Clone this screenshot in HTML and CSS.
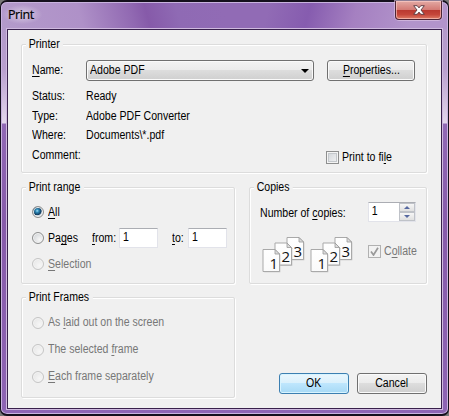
FILE: index.html
```html
<!DOCTYPE html>
<html lang="en">
<head>
<meta charset="utf-8">
<title>Print</title>
<link rel="stylesheet" href="styles.css">
</head>
<body>
<svg class="defs" aria-hidden="true">
  <defs>
    <linearGradient id="sheet" x2="0" y2="1"><stop offset="0" stop-color="#fff"/><stop offset="1" stop-color="#fafafa"/></linearGradient>
    <g id="page">
      <path d="M1.200 1.200h12l4 4v17.500h-16z" transform="translate(.6 .6)" fill="#bbb"/>
      <path d="M.5.5h12l4.500 4.500v17.500H.5z" fill="url(#sheet)" stroke="#a9a9a9"/>
      <path d="M12.500.5v4.500H17z" fill="#ddd" stroke="#999" stroke-width=".8"/>
    </g>
    <g id="stack">
      <use href="#page" x="24"/><text x="31" y="20">3</text>
      <use href="#page" x="12" y="5.500"/><text x="19" y="25">2</text>
      <use href="#page" y="12"/><text x="7" y="32">1</text>
    </g>
  </defs>
</svg>
<div class="window">
  <header class="titlebar">
    <h1>Print</h1>
    <button class="close" aria-label="Close"><svg width="12" height="10" viewBox="0 0 12 10"><path d="M.7.7h3.500L6 2.900 7.800.7h3.500L8 5l3.300 4.300H7.800L6 7.100 4.200 9.300H.7L4 5z" fill="#fff" stroke="#57383e" stroke-width=".9"/></svg></button>
  </header>
  <main class="client">
    <section class="group printer">
      <h2>Printer</h2>
      <div class="row name"><span class="key"><span class="t"><u>N</u>ame:</span></span><button class="btn combo"><span class="t">Adobe PDF</span><i></i></button><button class="btn props"><span class="t mid"><u>P</u>roperties...</span></button></div>
      <div class="row"><span class="key"><span class="t">Status:</span></span><span class="t">Ready</span></div>
      <div class="row"><span class="key"><span class="t">Type:</span></span><span class="t">Adobe PDF Converter</span></div>
      <div class="row"><span class="key"><span class="t">Where:</span></span><span class="t">Documents\*.pdf</span></div>
      <div class="row"><span class="key comment"><span class="t">Comment:</span></span><label class="file"><span class="check"></span><span class="t">Print to fi<u>l</u>e</span></label></div>
    </section>
    <div class="columns">
      <div class="left">
        <section class="group range">
          <h2>Print range</h2>
          <div class="row"><span class="radio on"></span><span class="t"><u>A</u>ll</span></div>
          <div class="row"><span class="radio"></span><span class="pages"><span class="t">Pa<u>g</u>es</span></span><span class="from"><span class="t"><u>f</u>rom:</span></span><span class="input"><span class="t">1</span></span><span class="to"><span class="t"><u>t</u>o:</span></span><span class="input"><span class="t">1</span></span></div>
          <div class="row off"><span class="radio"></span><span class="t"><u>S</u>election</span></div>
        </section>
        <section class="group frames">
          <h2>Print Frames</h2>
          <div class="row off"><span class="radio"></span><span class="t">As <u>l</u>aid out on the screen</span></div>
          <div class="row off"><span class="radio"></span><span class="t">The selected <u>f</u>rame</span></div>
          <div class="row off"><span class="radio"></span><span class="t"><u>E</u>ach frame separately</span></div>
        </section>
      </div>
      <div class="right">
        <section class="group copies">
          <h2>Copies</h2>
          <div class="row count"><span class="label"><span class="t">Number of <u>c</u>opies:</span></span><span class="input spin"><span class="t">1</span><span class="arrows"><b class="up"></b><b class="down"></b></span></span></div>
          <div class="row collate"><svg class="pagesicon" width="94" height="37" viewBox="0 0 94 37"><use href="#stack" x=".5"/><use href="#stack" x="48.500"/></svg><label class="off"><span class="check"><svg width="9" height="9" viewBox="0 0 9 9"><path d="M1 4.500l2.500 3.500L8 .8" fill="none" stroke="#999" stroke-width="1.700"/></svg></span><span class="t">C<u>o</u>llate</span></label></div>
        </section>
        <div class="actions"><button class="btn ok"><span class="t mid">OK</span></button><button class="btn"><span class="t mid">Cancel</span></button></div>
      </div>
    </div>
  </main>
</div>
</body>
</html>
```
FILE: styles.css
```css
* { box-sizing: border-box; }
html { background: #777; }
body { margin: 0; width: 449px; height: 416px; overflow: hidden; font: 12px/15px "Liberation Sans", sans-serif; color: #000; }
.defs { position: absolute; width: 0; height: 0; }
.defs text { font: 15px "Open Sans", sans-serif; fill: #111; }
button { font: inherit; color: inherit; padding: 0; }
h1, h2 { margin: 0; font-weight: normal; }
u { text-decoration: underline; text-underline-offset: 2px; text-decoration-thickness: 1px; text-decoration-skip-ink: none; }

.window {
  width: 449px; height: 416px; padding: 0 6px 6px 6px;
  border: 1px solid #15101d; border-top-width: 2px; border-bottom-width: 2px; border-radius: 7px;
  box-shadow: inset 0 0 0 1px #c9b3df;
  background:
    linear-gradient(#b39aca, #b99fce 40px, #e3d7ec 94px, #9169b5 95px, #875baa 193px, #8f66b5) 0 27px / 8px 100% no-repeat,
    linear-gradient(#b39aca, #b99fce 40px, #e3d7ec 94px, #9169b5 95px, #875baa 193px, #8f66b5) 100% 27px / 8px 100% no-repeat,
    linear-gradient(75deg, #b49bcb 0, #af91c8 80px, #9169b2 130px, #865aa9 145px, #8f6ab4 175px, rgba(145,107,181,0) 220px) 0 0 / 100% 28px no-repeat,
    linear-gradient(105deg, #916bb5 0, #916bb5 260px, #865caf 300px, #a580c1 345px, #b294cb 400px, #b294cb) 0 0 / 100% 28px no-repeat,
    #8e65b4;
}
.titlebar { display: flex; justify-content: space-between; align-items: flex-start; height: 27px; }
.titlebar h1 {
  margin: 3px 0 0 -4px; padding: 0 8px 0 5px; font: 12.500px/19px "Open Sans", sans-serif; letter-spacing: -.4px; -webkit-text-stroke: .2px #000;
  background: radial-gradient(ellipse, rgba(255,255,255,.5), rgba(255,255,255,0) 72%);
}
.close {
  width: 47px; height: 19px; margin: -1px 0 0 0; display: flex; align-items: center; justify-content: center;
  border: 1px solid #4d2534; border-top: 0; border-radius: 0 0 4px 4px;
  box-shadow: inset 0 0 0 1px rgba(255,210,205,.6), 0 0 0 1px rgba(225,200,230,.6);
  background: linear-gradient(#e3a9a4, #d47b75 48%, #b9382f 50%, #c5463a 75%, #de7c66);
}
.client { height: 380px; padding: 14px 14px 0 13px; border: 1px solid #38204c; outline: 1px solid #cfbadf; background: #f0f0f0; }

.group { border: 1px solid #dcdcdc; border-radius: 2px; box-shadow: 1px 1px #fff, inset 1px 1px #fff; padding-left: 10px; }
.group h2 { width: max-content; margin: -8px 0 0 -6px; padding: 0 4px 0 3px; font-size: 12px; line-height: 15px; background: #f0f0f0; transform: scaleX(.88); transform-origin: left; }
.row { display: flex; align-items: center; height: 26px; }
.t { display: inline-block; white-space: pre; transform: scaleX(.88); transform-origin: left; }
.t.mid { transform-origin: center; }
.off { color: #777; }

.printer { height: 129px; }
.printer .row { height: 19.500px; }
.printer .row.name { height: 21px; margin: 8px 0 6px; }
.key { width: 54px; flex: none; white-space: nowrap; }
.key.comment { width: 294px; }
.btn {
  height: 21px; width: 70px; display: flex; align-items: center; justify-content: center;
  border: 1px solid #707070; border-radius: 3px; box-shadow: inset 0 0 0 1px #fafafa;
  background: linear-gradient(#f3f3f3, #ebebeb 49%, #dddddd 50%, #cfcfcf);
}
.btn.combo { width: 228px; justify-content: space-between; padding: 0 4px 0 3px; }
.combo i { border: 4px solid transparent; border-top-color: #000; border-bottom: 0; }
.btn.props { width: 88px; margin-left: 13px; }
.file, .collate label { display: flex; align-items: center; gap: 3px; }
.file { margin-top: 4px; }
.check { display: flex; align-items: center; justify-content: center; width: 13px; height: 13px; border: 1px solid #8e8f8f; background: linear-gradient(135deg, #cfd3d8, #f4f4f5); background-clip: content-box; padding: 2px; box-shadow: inset 0 0 0 1px #f4f4f4, inset 0 0 0 2px #c4c8cc; }
.off .check { padding: 0; border-color: #b1b1b1; background: #f2f2f2; box-shadow: none; }

.columns { display: flex; gap: 14px; margin-top: 14px; }
.left { width: 214px; }
.right { width: 178px; }
.range { height: 97px; }
.range h2, .frames h2 { margin-bottom: 4px; }
.copies h2 { margin-bottom: 5px; }
.radio { flex: none; width: 12px; height: 12px; margin-right: 4px; border: 1px solid #8e8f8f; border-radius: 50%; background: radial-gradient(circle at 65% 65%, #f7f7f7, #d4d7da 75%); box-shadow: inset 0 0 0 1px #f4f4f4; }
.radio.on { background: radial-gradient(circle at 42% 38%, #9fe0f8 0, #2c86b4 20%, #10395c 48%, #c8d2da 56%, #eee 100%); }
.off .radio { border-color: #c5c5c5; background: radial-gradient(circle at 65% 65%, #f6f6f6, #e3e3e3); }
.pages { width: 44px; }
.from { width: 27px; padding-top: 1px; }
.to { width: 16px; margin-left: 14px; padding-top: 1px; }
.input { width: 39px; height: 20px; padding: 1px 0 0 3px; border: 1px solid #e2e3ea; border-top-color: #abadb3; background: #fff; }
.frames { height: 101px; margin-top: 13px; }
.frames .row { height: 27px; }
.copies { height: 97px; }
.copies .label { width: 108px; white-space: nowrap; }
.copies .count { height: 27px; }
.spin { width: 48px; display: flex; justify-content: space-between; padding: 0; margin-top: -3px; }
.spin .t { padding: 1px 0 0 3px; }
.arrows { display: flex; flex-direction: column; width: 16px; }
.arrows b { flex: 1; display: flex; align-items: center; justify-content: center; border: 1px solid #bfc2c8; background: linear-gradient(#f6f6f6, #e0e0e0); }
.arrows b::after { content: ""; border: 3px solid transparent; }
.arrows .up::after { border-top: 0; border-bottom-color: #5668a0; }
.arrows .down::after { border-bottom: 0; border-top-color: #5668a0; }
.collate { height: 46px; margin-top: 1px; }
.pagesicon { margin: 8px 12px 0 2px; flex: none; }
.collate label { margin-top: 1px; }
.actions { display: flex; justify-content: flex-end; gap: 8px; margin-top: 89px; }
.btn.ok { border-color: #3c7fb1; background: linear-gradient(#eaf6fd, #d9f0fc 49%, #bee6fd 50%, #a7d9f5); box-shadow: inset 0 0 0 1px #d8f4ff; }
```
